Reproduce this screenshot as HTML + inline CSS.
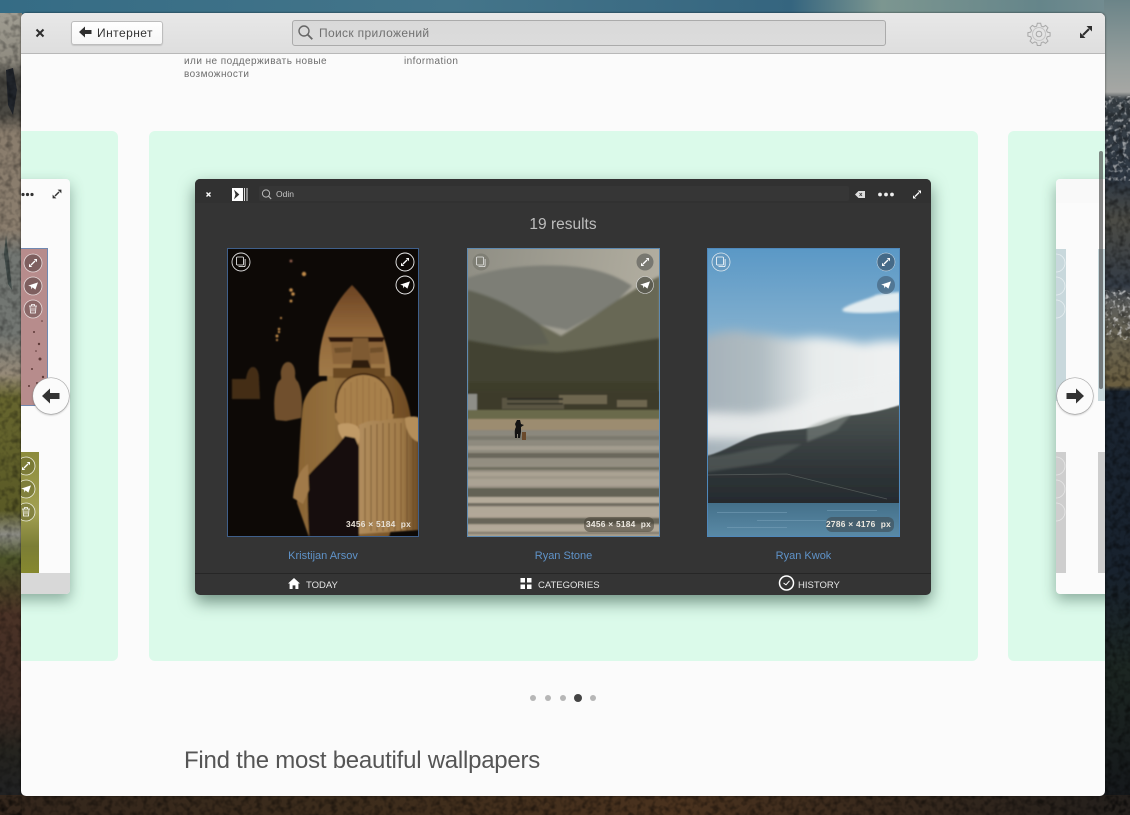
<!DOCTYPE html>
<html><head><meta charset="utf-8"><style>
html,body{margin:0;padding:0;width:1130px;height:815px;overflow:hidden;background:#1a1a1c;font-family:"Liberation Sans","Noto Sans CJK SC",sans-serif}
.a{position:absolute}
svg{display:block}
</style></head><body>
<svg class="a" style="left:0;top:0" width="1130" height="815" viewBox="0 0 1130 815">
<defs>
<linearGradient id="top" x1="0" x2="1" y1="0" y2="0"><stop offset="0" stop-color="#356c85"/><stop offset=".4" stop-color="#44758a"/><stop offset=".7" stop-color="#35657f"/><stop offset=".78" stop-color="#7c9690"/><stop offset=".92" stop-color="#65858a"/><stop offset="1" stop-color="#778e92"/></linearGradient>
<linearGradient id="l" gradientUnits="userSpaceOnUse" x1="0" x2="0" y1="13" y2="815"><stop offset="0" stop-color="#a09d92"/><stop offset=".06" stop-color="#8f8b80"/><stop offset=".08" stop-color="#45443f"/><stop offset=".125" stop-color="#4a4842"/><stop offset=".15" stop-color="#8a7d6d"/><stop offset=".27" stop-color="#8a7d6d"/><stop offset=".3" stop-color="#727672"/><stop offset=".4" stop-color="#727672"/><stop offset=".45" stop-color="#968a78"/><stop offset=".48" stop-color="#66652e"/><stop offset=".62" stop-color="#5a5a26"/><stop offset=".65" stop-color="#8c8c84"/><stop offset=".68" stop-color="#4c5428"/><stop offset=".75" stop-color="#4a3226"/><stop offset=".87" stop-color="#3e2c24"/><stop offset=".92" stop-color="#25241f"/><stop offset="1" stop-color="#1f2024"/></linearGradient>
<linearGradient id="r" gradientUnits="userSpaceOnUse" x1="0" x2="0" y1="0" y2="815"><stop offset="0" stop-color="#6b8488"/><stop offset=".08" stop-color="#98a09e"/><stop offset=".113" stop-color="#a6a7a4"/><stop offset=".122" stop-color="#3a4248"/><stop offset=".22" stop-color="#2e3844"/><stop offset=".27" stop-color="#4c4c46"/><stop offset=".35" stop-color="#343c46"/><stop offset=".37" stop-color="#5a5c5a"/><stop offset=".42" stop-color="#6a6450"/><stop offset=".473" stop-color="#6a5e40"/><stop offset=".48" stop-color="#1a2430"/><stop offset=".7" stop-color="#18222e"/><stop offset=".82" stop-color="#1c2622"/><stop offset="1" stop-color="#14161a"/></linearGradient>
<linearGradient id="b" x1="0" x2="1" y1="0" y2="0"><stop offset="0" stop-color="#33261c"/><stop offset=".3" stop-color="#3c2c1c"/><stop offset=".6" stop-color="#4a321e"/><stop offset="1" stop-color="#231f1c"/></linearGradient>
<filter id="n" x="0" y="0" width="100%" height="100%"><feTurbulence type="fractalNoise" baseFrequency=".16" numOctaves="2" seed="4"/><feColorMatrix values="0 0 0 0 0 0 0 0 0 0 0 0 0 0 0 2.4 0 0 0 -1"/></filter>
<filter id="w" x="0" y="0" width="100%" height="100%"><feTurbulence type="fractalNoise" baseFrequency=".22" numOctaves="2" seed="9"/><feColorMatrix values="0 0 0 0 .85 0 0 0 0 .85 0 0 0 0 .85 4 0 0 0 -2.1"/></filter>
</defs>
<rect width="1130" height="815" fill="#1a1a1c"/>
<rect width="1130" height="14" fill="url(#top)"/>
<rect y="13" width="22" height="802" fill="url(#l)"/>
<rect x="1104" y="0" width="26" height="815" fill="url(#r)"/>
<rect y="795" width="1130" height="20" fill="url(#b)"/>
<path d="M6 70l7-2 4 22-4 25-5-10z" fill="#20242a"/>
<path d="M6 235l3 25 3 30-4-6-4-30z" fill="#3a4644" opacity=".8"/>
<rect y="13" width="22" height="802" filter="url(#n)" opacity=".32"/>
<rect x="1104" y="96" width="26" height="719" filter="url(#n)" opacity=".45"/>
<rect x="1104" y="96" width="26" height="85" filter="url(#w)" opacity=".55"/>
<rect x="1104" y="290" width="26" height="50" filter="url(#w)" opacity=".65"/>
<rect y="796" width="1130" height="19" filter="url(#n)" opacity=".45"/>
</svg>

<svg width="0" height="0" style="position:absolute"><defs>
<g id="expand"><path d="M-2 2L2-2" stroke="#fff" stroke-width="1.300" fill="none"/><path d="M.8-4h3.200v3.200zM-.8 4h-3.200v-3.200z" fill="#fff"/></g>
<g id="plane"><path d="M-4.800-.4L5-3.600 2.400 3.600-.5 1.400-1.600 3.400-2 .6z" fill="#fff"/></g>
<g id="copy" fill="none" stroke="#fff" stroke-width=".8"><rect x="-4.500" y="-5" width="7" height="8" rx="1"/><path d="M-2.500 4.600h5.600a1 1 0 0 0 1-1v-6.600"/></g>
<g id="trash" fill="none" stroke="#fff" stroke-width=".8"><path d="M-4-3h8M-3-3l.5 7h5l.5-7M-1.500-3v-1.500h3V-3M-1-1.500v4M1-1.500v4"/></g>
<filter id="b1" x="-5%" y="-5%" width="110%" height="110%"><feGaussianBlur stdDeviation=".7"/></filter>
<filter id="b2" x="-5%" y="-5%" width="110%" height="110%"><feGaussianBlur stdDeviation="1.400"/></filter>
<filter id="b5" x="-20%" y="-20%" width="140%" height="140%"><feGaussianBlur stdDeviation="5"/></filter>
</defs></svg>

<div class="a" style="left:21px;top:13px;width:1084px;height:783px;border-radius:5px;overflow:hidden;background:#fbfbfb;box-shadow:0 0 2px rgba(0,0,0,.6)">
  <div class="a" style="left:0;top:0;width:1084px;height:40px;background:linear-gradient(#e8e8e8,#dedede);border-bottom:1px solid #b8b8b8;z-index:5"></div>

  <div class="a" style="left:163px;top:42px;width:175px;font-size:10px;line-height:13px;color:#6d6d6d;letter-spacing:.45px">или не поддерживать новые возможности</div>
  <div class="a" style="left:383px;top:42px;font-size:10px;line-height:13px;color:#6d6d6d;letter-spacing:.45px">information</div>

  <!-- left slide -->
  <div class="a" style="left:-40px;top:118px;width:137px;height:530px;background:#dbfaea;border-radius:6px"></div>
  <div class="a" style="left:-300px;top:166px;width:349px;height:415px;background:#fbfbfb;border-radius:4px;box-shadow:0 6px 14px rgba(30,70,55,.42);overflow:hidden">
    <div class="a" style="left:300px;top:70px;width:26px;height:156px;background:#b78c8c;outline:1px solid #7088b0">
      <svg width="26" height="156" viewBox="0 0 26 156"><g fill="#5e3a38"><circle cx="18" cy="95" r="1.200"/><circle cx="13" cy="83" r="1"/><circle cx="19" cy="110" r="1.500"/><circle cx="11" cy="120" r="1"/><circle cx="22" cy="128" r="1.200"/><circle cx="16" cy="134" r="1"/><circle cx="8" cy="137" r="1"/><circle cx="21" cy="72" r=".8"/><circle cx="15" cy="102" r=".8"/></g>
      <g><circle cx="12" cy="14" r="9" fill="rgba(70,50,50,.5)" stroke="#e8dcdc" stroke-width=".8"/><use href="#expand" x="12" y="14"/><circle cx="12" cy="37" r="9" fill="rgba(70,50,50,.5)" stroke="#e8dcdc" stroke-width=".8"/><use href="#plane" x="12" y="37"/><circle cx="12" cy="60" r="9" fill="rgba(70,50,50,.4)" stroke="#e8dcdc" stroke-width=".8"/><use href="#trash" x="12" y="60"/></g></svg>
    </div>
    <div class="a" style="left:300px;top:273px;height:121px;width:18px;background:linear-gradient(#8c8b3c,#a2a052 50%,#7b7d35 78%,#86882e);">
      <svg width="18" height="121" viewBox="0 0 18 121"><g><circle cx="5" cy="14" r="9" fill="rgba(90,90,40,.4)" stroke="#f0f0e0" stroke-width=".8"/><use href="#expand" x="5" y="14"/><circle cx="5" cy="37" r="9" fill="rgba(90,90,40,.4)" stroke="#f0f0e0" stroke-width=".8"/><use href="#plane" x="5" y="37"/><circle cx="5" cy="60" r="9" fill="rgba(90,90,40,.4)" stroke="#f0f0e0" stroke-width=".8"/><use href="#trash" x="5" y="60"/></g></svg>
    </div>
    <div class="a" style="left:0;top:394px;width:349px;height:21px;background:#d8d8d8"></div>
    <div class="a" style="left:300px;top:13px;width:19px;height:5px"><svg width="19" height="5"><circle cx="2" cy="2.500" r="1.600" fill="#333"/><circle cx="6.500" cy="2.500" r="1.600" fill="#333"/><circle cx="11" cy="2.500" r="1.600" fill="#333"/></svg></div>
    <svg class="a" style="left:330px;top:9px" width="12" height="12" viewBox="-6 -6 12 12"><path d="M-2 2L2-2" stroke="#333" stroke-width="1.500"/><path d="M.6-4.400h3.800v3.800zM-.6 4.400h-3.800v-3.800z" fill="#333"/></svg>
  </div>

  <!-- centre slide -->
  <div class="a" style="left:128px;top:118px;width:829px;height:530px;background:#dbfaea;border-radius:6px"></div>

  <!-- right slide -->
  <div class="a" style="left:987px;top:118px;width:200px;height:530px;background:#dbfaea;border-radius:6px"></div>
  <div class="a" style="left:1035px;top:166px;width:300px;height:415px;background:#fbfbfb;border-radius:4px;box-shadow:0 6px 14px rgba(30,70,55,.42);overflow:hidden">
    <div class="a" style="left:0;top:0;width:300px;height:24px;background:#f9f9f9"></div>
    <div class="a" style="left:0;top:70px;width:10px;height:152px;background:#c8d8dc"></div>
    <div class="a" style="left:42px;top:70px;width:10px;height:152px;background:#c8d8dc"></div>
    <div class="a" style="left:0;top:273px;width:10px;height:121px;background:#cecece"></div>
    <div class="a" style="left:42px;top:273px;width:10px;height:121px;background:#cecece"></div>
    <svg class="a" style="left:-10px;top:70px" width="24" height="90" fill="none" stroke="#e6eef0" stroke-width=".8"><circle cx="10" cy="14" r="9"/><circle cx="10" cy="37" r="9"/><circle cx="10" cy="60" r="9"/></svg>
    <svg class="a" style="left:-10px;top:273px" width="24" height="90" fill="none" stroke="#e6e6e6" stroke-width=".8"><circle cx="10" cy="14" r="9"/><circle cx="10" cy="37" r="9"/><circle cx="10" cy="60" r="9"/></svg>
  </div>

  <!-- main mock app -->
  <div class="a" style="left:174px;top:166px;width:736px;height:416px;background:#343434;border-radius:5px;box-shadow:0 7px 16px rgba(25,60,45,.55);overflow:hidden">
    <div class="a" style="left:0;top:0;width:736px;height:24px;background:#313131"></div>
    <div class="a" style="left:64px;top:7px;width:590px;height:15px;background:#363636;border-radius:2px"></div>
    <svg class="a" style="left:0;top:0" width="736" height="30" viewBox="0 0 736 30">
      <path d="M11.500 13.500l4 4M15.500 13.500l-4 4" stroke="#fff" stroke-width="1.400"/>
      <rect x="37" y="9" width="11" height="13" fill="#fff"/><path d="M40 12.200l3.600 3.300-3.600 3.300 1-3.300z" fill="#333" stroke="#333"/><path d="M49.500 9v13M52 9v13" stroke="#ddd" stroke-width="1"/>
      <circle cx="71" cy="14.500" r="3.600" fill="none" stroke="#bbb" stroke-width="1"/><path d="M73.600 17.200l2.600 2.800" stroke="#bbb" stroke-width="1.100"/>
      <path d="M660 15.500l3.500-3.500h6.500v7h-6.500z" fill="#ddd"/><path d="M664.500 14l2.500 3M667 14l-2.500 3" stroke="#333" stroke-width=".8"/>
      <circle cx="685" cy="15.500" r="1.900" fill="#eee"/><circle cx="691" cy="15.500" r="1.900" fill="#eee"/><circle cx="697" cy="15.500" r="1.900" fill="#eee"/>
      <use href="#expand" x="722" y="15.500"/>
    </svg>
    <div class="a" style="left:81px;top:10px;font-size:8.500px;line-height:11px;color:#c4c4c4">Odin</div>
    <div class="a" style="left:0;top:36px;width:736px;text-align:center;font-size:15.500px;line-height:19px;color:#bdbdbd">19 results</div>

    <!-- photo 1 -->
    <svg class="a" style="left:32px;top:69px" width="192" height="289" viewBox="0 0 192 289">
      <defs>
        <linearGradient id="hel" x1="0" x2="0" y1="0" y2="1"><stop offset="0" stop-color="#6a4222"/><stop offset=".5" stop-color="#93683a"/><stop offset="1" stop-color="#a07a48"/></linearGradient>
        <linearGradient id="rope" x1="0" x2="1" y1="0" y2="0"><stop offset="0" stop-color="#b08c5c"/><stop offset=".7" stop-color="#a27c4a"/><stop offset="1" stop-color="#6a4a24"/></linearGradient>
        <linearGradient id="body" x1="0" x2="1" y1="0" y2="0"><stop offset="0" stop-color="#8a6434"/><stop offset=".3" stop-color="#94703e"/><stop offset="1" stop-color="#6e4a22"/></linearGradient>
      </defs>
      <rect width="192" height="289" fill="#0d0906"/>
      <g filter="url(#b1)">
      <g fill="#c08a48"><circle cx="64" cy="13" r="1.500" fill="#8a5a48"/><circle cx="77" cy="26" r="2.200"/><circle cx="64" cy="42" r="1.800"/><circle cx="66" cy="46" r="1.800"/><circle cx="64" cy="53" r="1.500"/><circle cx="54" cy="70" r="1.100"/><circle cx="52" cy="81" r="1.300"/><circle cx="50" cy="88" r="1.500"/><circle cx="52" cy="84" r="1.200"/><circle cx="50" cy="92" r="1.100"/></g>
      <path d="M5 131h14c1-6 3-12 7-12s6 6 6 12l1 20H5z" fill="#55391c" opacity=".75"/>
      <path d="M48 170c-2-16 0-32 4-37 3-2 2-3 2-5-1-6 2-14 7-14s8 7 7 14c0 2 1 4 3 6 4 8 5 22 3 36l-15 3-10-1z" fill="#7a5832" opacity=".9"/>
      <path d="M70 255C72 205 74 170 76 157c2-10 12-26 24-24v-8h60c12 5 20 20 24 45l2 35-24 84H82z" fill="url(#body)"/>
      <path d="M92 128c-2-35 10-68 33-91 20 20 37 52 39 91z" fill="url(#hel)"/>
      <path d="M101 89h57l-2 5h-53z" fill="#2c1808"/>
      <path d="M104 94h21l1 22h-20zM141 94h16l1 22h-17z" fill="#8a6438"/>
      <path d="M107 100l17-1v5l-16 1zM143 100l13-1v5l-13 1z" fill="#70502c"/>
      <path d="M126 90h15l3 28h-20z" fill="#7e5a32"/>
      <path d="M126 112h15l3 8h-20z" fill="#2e1a0a"/>
      <path d="M106 120h52v10h-52z" fill="#6a4824"/>
      <path d="M108 170c-2-25 6-42 28-43 22 0 32 20 30 44l-5 8h-46z" fill="#a8804c"/>
      <g stroke="#8a6436" stroke-width=".7" opacity=".7"><path d="M118 140v38M124 134v44M130 130v48M136 128v50M142 130v48M148 134v44M154 140v38M160 150v28"/></g>
      <path d="M109 165c-2-22 7-38 27-39 20 0 31 18 30 40" fill="none" stroke="#3c220e" stroke-width="1.800"/>
      <path d="M132 177c8-4 14-5 22-4 10-3 22-3 38-3v112l-60 4z" fill="url(#rope)"/>
      <g stroke="#5e3f1e" stroke-width=".8" fill="none" opacity=".75"><path d="M138 180v100M144 177v106M150 176v107M156 175v108M162 175v108M168 175v108M174 175v108M180 175v108M186 175v108"/></g>
      <path d="M111 177c6-3 16-2 20 2 3 4 2 14 0 18l-9 2c-5-6-12-14-11-22z" fill="#c09a66"/>
      <path d="M178 170c5-2 12-2 14 0v24c-8-2-14-12-14-24z" fill="#b48e5a"/>
      <path d="M118 188c-12 16-29 30-37 40-1 18 0 40 1 61h50v-90l-4-9z" fill="#150d07"/>
      <path d="M66 250c1-14 6-28 15-34l1 26-6 14z" fill="#a17a4a"/>
      </g>
      <rect x=".5" y=".5" width="191" height="288" fill="none" stroke="#3f5f8a"/>
      <circle cx="14" cy="14" r="9" fill="none" stroke="#ddd" stroke-width=".9"/><use href="#copy" x="14" y="14"/>
      <circle cx="178" cy="14" r="9" fill="none" stroke="#eee" stroke-width=".9"/><use href="#expand" x="178" y="14"/>
      <circle cx="178" cy="37" r="9" fill="none" stroke="#eee" stroke-width=".9"/><use href="#plane" x="178" y="37"/>
    </svg>

    <!-- photo 2 -->
    <svg class="a" style="left:272px;top:69px" width="193" height="289" viewBox="0 0 193 289">
      <defs>
        <linearGradient id="sky2" x1="0" x2="1" y1="0" y2=".3"><stop offset="0" stop-color="#8f8e84"/><stop offset="1" stop-color="#b4b0a2"/></linearGradient>
        <linearGradient id="sand" x1="0" x2="0" y1="0" y2="1"><stop offset="0" stop-color="#8a877c"/><stop offset="1" stop-color="#a89e8c"/></linearGradient>
      </defs>
      <rect width="193" height="289" fill="url(#sky2)"/>
      <g filter="url(#b2)">
      <path d="M0 30c30-10 60-14 100-12 30 2 50 10 65 20l-20 20-45 24-50-10-50-20z" fill="#7d7e76"/>
      <path d="M0 42c25 6 50 18 72 34l22 12 36-22c20-14 42-28 63-38v80H0z" fill="#676854"/>
      <path d="M0 42c25 6 50 18 72 34l10 20-82 6z" fill="#5f6152"/>
      <path d="M0 92c30 5 50 10 90 12 30-2 60-8 103-14v52H0z" fill="#434330"/>
      <rect y="134" width="193" height="12" fill="#3e3d2c"/>
      </g>
      <g filter="url(#b1)">
      <rect y="143" width="193" height="20" fill="#3d3a2c"/>
      <g fill="#6e6650"><rect x="0" y="146" width="10" height="16" fill="#8e8e88"/><rect x="35" y="150" width="62" height="11" fill="#5a5442"/><rect x="92" y="147" width="48" height="9"/><rect x="150" y="152" width="30" height="7"/></g>
      <g fill="#2c2a20"><rect x="40" y="150" width="56" height="2"/><rect x="40" y="155" width="56" height="1.500"/></g>
      <rect y="162" width="193" height="10" fill="#6a6a4c"/>
      <rect y="171" width="193" height="11" fill="#9c8c70"/>
      <rect y="182" width="193" height="107" fill="url(#sand)"/>
      <g fill="#5e5c50"><rect y="188" width="193" height="4" opacity=".35"/><rect y="205" width="193" height="5" opacity=".75"/><rect y="219" width="193" height="3" opacity=".65"/><rect y="228" width="193" height="3" opacity=".4"/><rect y="240" width="193" height="9" opacity=".9"/><rect y="255" width="193" height="3" opacity=".75"/><rect y="270" width="193" height="6" opacity=".85"/><rect y="284" width="193" height="2" opacity=".5"/></g>
      <g fill="#bdb3a3"><rect y="198" width="193" height="4" opacity=".45"/><rect y="224" width="193" height="14" opacity=".5"/><rect y="249" width="193" height="6" opacity=".7"/><rect y="259" width="193" height="10" opacity=".6"/><rect y="277" width="193" height="6" opacity=".6"/></g>
      </g>
      <path d="M48 190c0-4-1-8 1-11l-1-3 2-4h3l1 4 3 1-3 2 0 5-1 6h-2v-4l-1 0 0 4z" fill="#141414"/>
      <rect x="55" y="184" width="4" height="8" fill="#6a4a2c"/>
      <rect x=".5" y=".5" width="192" height="288" fill="none" stroke="#5f8ab0"/>
      <circle cx="14" cy="14" r="8.500" fill="rgba(120,120,110,.7)"/><use href="#copy" x="14" y="14" opacity=".8"/>
      <circle cx="178" cy="14" r="8.500" fill="rgba(110,110,105,.85)"/><use href="#expand" x="178" y="14"/>
      <circle cx="178" cy="37" r="8.500" fill="rgba(90,90,80,.85)" stroke="#ddd" stroke-width=".6"/><use href="#plane" x="178" y="37"/>
      <rect x="117" y="269" width="70" height="15" rx="6" fill="rgba(70,65,55,.55)"/>
    </svg>

    <!-- photo 3 -->
    <svg class="a" style="left:512px;top:69px" width="193" height="289" viewBox="0 0 193 289">
      <defs>
        <linearGradient id="sky3" x1="0" x2="0" y1="0" y2="1"><stop offset="0" stop-color="#5a98c6"/><stop offset=".35" stop-color="#8ab4d0"/><stop offset=".6" stop-color="#a8bcc8"/></linearGradient>
        <linearGradient id="cl3" x1="0" x2="1" y1="0" y2="0"><stop offset="0" stop-color="#a4b0b8"/><stop offset=".3" stop-color="#b0bcc2"/><stop offset=".55" stop-color="#e8ecec"/><stop offset="1" stop-color="#f0f2f2"/></linearGradient>
        <linearGradient id="hill" x1="0" x2="0" y1="0" y2="1"><stop offset="0" stop-color="#4c5452"/><stop offset=".6" stop-color="#2f3538"/><stop offset="1" stop-color="#23282c"/></linearGradient>
        <linearGradient id="sea" x1="0" x2="0" y1="0" y2="1"><stop offset="0" stop-color="#44708a"/><stop offset="1" stop-color="#5a8aa6"/></linearGradient>
      </defs>
      <rect width="193" height="289" fill="url(#sky3)"/>
      <path d="M137 60c10-6 25-9 32-13 8-2 16-2 24-3v19c-18 2-40 3-54 1-4-1-5-2-2-4z" fill="#e2ecf0" filter="url(#b2)"/>
      <path d="M-10 92c20-8 40-12 55-6 14-2 30 6 48 4 25-3 50 4 65 6 10-3 25-4 45-2v120H-10z" fill="url(#cl3)" filter="url(#b5)"/>
      <path d="M-10 165c25-3 50 4 70-2 20 0 40-10 60-18 25-4 50-8 80-14v60H-10z" fill="#eef0f0" opacity=".85" filter="url(#b5)"/>
      <path d="M0 208c18-5 32-15 50-21 20-5 45-4 65-10 12-4 22-9 33-10 16-2 32-6 45-10v106H0z" fill="url(#hill)" filter="url(#b1)"/>
      <path d="M100 180c15-8 30-12 45-14l-15 16-30 12z" fill="#8e9690" opacity=".45" filter="url(#b2)"/>
      <path d="M0 208c20 2 50-12 95-12l-30 18-65 10z" fill="#5e6664" opacity=".55" filter="url(#b2)"/>
      <path d="M0 227l80-1 100 25" fill="none" stroke="#6c7470" stroke-width=".8" opacity=".6"/>
      <rect y="255" width="193" height="34" fill="url(#sea)"/>
      <g fill="#7ca4bc" opacity=".5"><rect x="10" y="264" width="70" height="1"/><rect x="50" y="272" width="90" height="1"/><rect x="20" y="279" width="60" height="1"/><rect x="120" y="262" width="50" height="1"/></g>
      <rect x=".5" y=".5" width="192" height="288" fill="none" stroke="#4f88bb"/>
      <circle cx="14" cy="14" r="9" fill="rgba(110,150,180,.35)" stroke="#dfe8ee" stroke-width=".8"/><use href="#copy" x="14" y="14"/>
      <circle cx="179" cy="14" r="9" fill="rgba(60,90,115,.75)" stroke="#dfe8ee" stroke-width=".5"/><use href="#expand" x="179" y="14"/>
      <circle cx="179" cy="37" r="9" fill="rgba(70,100,125,.7)"/><use href="#plane" x="179" y="37"/>
      <rect x="119" y="269" width="68" height="15" rx="6" fill="rgba(60,70,75,.55)"/>
    </svg>

    <div class="a" style="left:97px;top:340px;width:119px;text-align:right;font-size:8.400px;line-height:11px;font-weight:bold;letter-spacing:.25px;color:#e6e0d6;white-space:pre">3456 × 5184  px</div>
    <div class="a" style="left:337px;top:340px;width:119px;text-align:right;font-size:8.400px;line-height:11px;font-weight:bold;letter-spacing:.25px;color:#ece8e0;white-space:pre">3456 × 5184  px</div>
    <div class="a" style="left:577px;top:340px;width:119px;text-align:right;font-size:8.400px;line-height:11px;font-weight:bold;letter-spacing:.25px;color:#ece8e0;white-space:pre">2786 × 4176  px</div>

    <div class="a" style="left:32px;top:370px;width:192px;text-align:center;font-size:11px;line-height:14px;color:#5f93c9">Kristijan Arsov</div>
    <div class="a" style="left:272px;top:370px;width:193px;text-align:center;font-size:11px;line-height:14px;color:#5f93c9">Ryan Stone</div>
    <div class="a" style="left:512px;top:370px;width:193px;text-align:center;font-size:11px;line-height:14px;color:#5f93c9">Ryan Kwok</div>

    <div class="a" style="left:0;top:394px;width:736px;height:1px;background:#262626"></div>
    <svg class="a" style="left:0;top:395px" width="736" height="21" viewBox="0 0 736 21">
      <path d="M93 9.500l6-5.500 6 5.500h-1.600V15h-3v-3.600h-2.800V15h-3V9.500z" fill="#fff"/>
      <g fill="#fff"><rect x="325.500" y="4" width="4.500" height="4.500"/><rect x="332" y="4" width="4.500" height="4.500"/><rect x="325.500" y="10.500" width="4.500" height="4.500"/><rect x="332" y="10.500" width="4.500" height="4.500"/></g>
      <circle cx="591.500" cy="9" r="7" fill="none" stroke="#fff" stroke-width="1.500"/><path d="M588.500 9l2.500 1.800 3.500-4" fill="none" stroke="#fff" stroke-width="1"/>
    </svg>
    <div class="a" style="left:111px;top:401px;font-size:9.500px;line-height:12px;color:#e6e6e6">TODAY</div>
    <div class="a" style="left:343px;top:401px;font-size:9.500px;line-height:12px;color:#e6e6e6">CATEGORIES</div>
    <div class="a" style="left:603px;top:401px;font-size:9.500px;line-height:12px;color:#e6e6e6">HISTORY</div>
  </div>

  <!-- arrows -->
  <div class="a" style="left:12px;top:365px;width:36px;height:36px;border-radius:50%;background:#fbfbfb;box-shadow:0 0 0 .5px #999,0 1px 2px rgba(0,0,0,.3)"></div>
  <svg class="a" style="left:21px;top:374px" width="18" height="18" viewBox="0 0 18 18"><path d="M0 9l8-7.500V6h9.500v6H8v4.500z" fill="#333"/></svg>
  <div class="a" style="left:1036px;top:365px;width:36px;height:36px;border-radius:50%;background:#fbfbfb;box-shadow:0 0 0 .5px #999,0 1px 2px rgba(0,0,0,.3)"></div>
  <svg class="a" style="left:1045px;top:374px" width="18" height="18" viewBox="0 0 18 18"><path d="M18 9l-8-7.500V6H.5v6H10v4.500z" fill="#333"/></svg>

  <!-- scrollbar -->
  <div class="a" style="left:1078px;top:138px;width:4px;height:238px;border-radius:2px;background:rgba(60,60,60,.6)"></div>

  <!-- dots -->
  <svg class="a" style="left:500px;top:675px" width="90" height="20"><g fill="#b6b6b6"><circle cx="12" cy="10" r="3"/><circle cx="27" cy="10" r="3"/><circle cx="42" cy="10" r="3"/><circle cx="72" cy="10" r="3"/></g><circle cx="57" cy="10" r="4" fill="#444"/></svg>

  <div class="a" style="left:163px;top:733px;font-size:24px;line-height:30px;color:#555;letter-spacing:-.24px;white-space:nowrap">Find the most beautiful wallpapers</div>

  <!-- header content -->
  <div class="a" style="left:0;top:0;width:1084px;height:41px;z-index:6">
    <svg class="a" style="left:14px;top:15px" width="10" height="10" viewBox="0 0 10 10"><path d="M1.500 1.500l7 7M8.500 1.500l-7 7" stroke="#2e2e2e" stroke-width="2"/></svg>
    <div class="a" style="left:50px;top:8px;width:90px;height:22px;border:1px solid #bdbdbd;border-radius:3px;background:linear-gradient(#fff,#f6f6f6);box-shadow:0 1px 1px rgba(0,0,0,.12)"></div>
    <svg class="a" style="left:58px;top:13px" width="13" height="12" viewBox="0 0 13 12"><path d="M0 6l6-5.500V4h6.500v4H6v3.500z" fill="#2e2e2e"/></svg>
    <div class="a" style="left:76px;top:13px;font-size:12px;line-height:15px;color:#333;letter-spacing:.45px">Интернет</div>
    <div class="a" style="left:271px;top:7px;width:592px;height:24px;border:1px solid #ababab;border-radius:3px;background:linear-gradient(#d9d9d9,#dcdcdc)"></div>
    <svg class="a" style="left:276px;top:11px" width="17" height="17" viewBox="0 0 17 17"><circle cx="7" cy="7" r="5" fill="none" stroke="#666" stroke-width="1.400"/><path d="M10.800 10.800l4.500 4.500" stroke="#666" stroke-width="1.800"/></svg>
    <div class="a" style="left:298px;top:13px;font-size:12px;line-height:15px;color:#707070;letter-spacing:.35px">Поиск приложений</div>
    <svg class="a" style="left:1006px;top:9px" width="24" height="24" viewBox="0 0 24 24" fill="none" stroke="#a8a8a8" stroke-width="1"><path d="M10.300 1.800h3.400l.6 2.800 1.900.8 2.400-1.500 2.400 2.400-1.500 2.400.8 1.900 2.800.6v3.400l-2.800.6-.8 1.900 1.500 2.400-2.400 2.400-2.400-1.500-1.900.8-.6 2.800h-3.400l-.6-2.800-1.900-.8-2.400 1.500-2.400-2.400 1.500-2.400-.8-1.900-2.800-.6v-3.400l2.800-.6.8-1.900-1.500-2.400 2.400-2.400 2.400 1.500 1.900-.8z" transform="translate(0 -.500)"/><circle cx="12" cy="12" r="2.800"/><circle cx="12" cy="12" r="6.500" stroke="#c4c4c4"/></svg>
    <svg class="a" style="left:1058px;top:12px" width="14" height="14" viewBox="-7 -7 14 14"><path d="M-3 3L3-3" stroke="#2e2e2e" stroke-width="2"/><path d="M.5-6H6v5.500zM-.5 6H-6V.5z" fill="#2e2e2e"/></svg>
  </div>
</div>
</body></html>
